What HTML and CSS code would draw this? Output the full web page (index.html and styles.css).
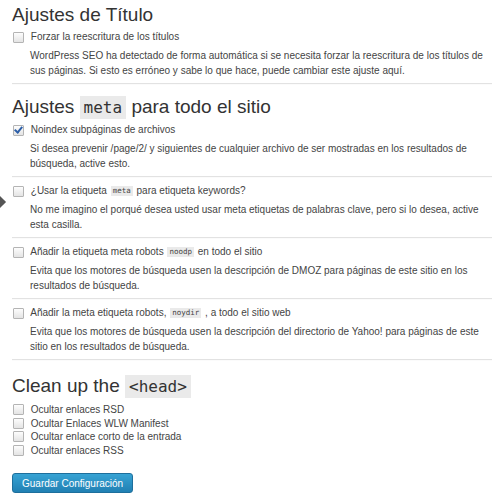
FILE: index.html
```html
<!DOCTYPE html>
<html lang="es">
<head>
  <meta charset="UTF-8" />
  <title>Ajustes</title>
  <link rel="stylesheet" href="styles.css">
</head>
<body>

  <span class="flecha-menu"></span>

  <div class="wrap">
    <h2 class="titulo">Ajustes de Título</h2>
    <div class="opcion">
      <label class="check"><input type="checkbox"> Forzar la reescritura de los títulos</label>
      <p class="desc">WordPress SEO ha detectado de forma automática si se necesita forzar la reescritura de los títulos de sus páginas. Si esto es erróneo y sabe lo que hace, puede cambiar este ajuste aquí.</p>
    </div>

    <h2 class="titulo">Ajustes <code>meta</code> para todo el sitio</h2>
    <div class="opcion">
      <label class="check"><input type="checkbox" checked> Noindex subpáginas de archivos</label>
      <p class="desc">Si desea prevenir /page/2/ y siguientes de cualquier archivo de ser mostradas en los resultados de búsqueda, active esto.</p>
    </div>
    <div class="opcion">
      <label class="check"><input type="checkbox"> ¿Usar la etiqueta <code>meta</code> para etiqueta keywords?</label>
      <p class="desc">No me imagino el porqué desea usted usar meta etiquetas de palabras clave, pero si lo desea, active esta casilla.</p>
    </div>
    <div class="opcion">
      <label class="check"><input type="checkbox"> Añadir la etiqueta meta robots <code>noodp</code> en todo el sitio</label>
      <p class="desc">Evita que los motores de búsqueda usen la descripción de DMOZ para páginas de este sitio en los resultados de búsqueda.</p>
    </div>
    <div class="opcion">
      <label class="check"><input type="checkbox"> Añadir la meta etiqueta robots, <code>noydir</code> , a todo el sitio web</label>
      <p class="desc">Evita que los motores de búsqueda usen la descripción del directorio de Yahoo! para páginas de este sitio en los resultados de búsqueda.</p>
    </div>

    <h2 class="titulo titulo-head">Clean up the <code>&lt;head&gt;</code></h2>
    <div class="lista">
      <label class="check"><input type="checkbox"> Ocultar enlaces RSD</label>
      <label class="check"><input type="checkbox"> Ocultar Enlaces WLW Manifest</label>
      <label class="check"><input type="checkbox"> Ocultar enlace corto de la entrada</label>
      <label class="check"><input type="checkbox"> Ocultar enlaces RSS</label>
    </div>

    <button class="boton">Guardar Configuración</button>
  </div>

</body>
</html>
```

FILE: styles.css
```css
body {
  margin: 0;
  background-color: #fff;
  font-family: "Liberation Sans", Arial, sans-serif;
  font-size: 10px;
  color: #444;
}

.wrap {
  padding: 2px 8px 0 12px;
}

/* flechita del menú lateral, asoma por la izquierda */
.flecha-menu {
  position: absolute;
  left: -6px;
  top: 197px;
  width: 10px;
  height: 10px;
  background-color: #555;
  transform: rotate(45deg);
}

.titulo {
  margin: 0 0 2px;
  font-size: 19px;
  font-weight: normal;
  line-height: 26px;
  color: #333;
}

.opcion + .titulo {
  margin-top: 10px;
}

.opcion + .titulo-head {
  margin-top: 13px;
}

.titulo code {
  font-family: "DejaVu Sans Mono", monospace;
  font-size: 16px;
  background-color: #eaeaea;
  padding: 2px 4px;
  color: #333;
}

.opcion {
  border-bottom: 1px solid #e2e2e2;
  box-shadow: 0 1px 0 #fbfbfb;
  padding-bottom: 5px;
  margin-bottom: 7px;
}

.check {
  display: flex;
  align-items: center;
  line-height: 14px;
  white-space: pre;
}

.lista .check {
  line-height: 13.5px;
}

.check input {
  appearance: none;
  -webkit-appearance: none;
  position: relative;
  box-sizing: border-box;
  width: 11px;
  height: 11px;
  margin: 0 4px 0 1px;
  border: 1px solid #b4b4b4;
  border-radius: 1px;
  background: linear-gradient(#fdfdfd, #e4e4e4);
}

.check input:checked::after {
  content: "";
  position: absolute;
  left: 2px;
  top: -1px;
  width: 3px;
  height: 6px;
  border: solid #2d5fa8;
  border-width: 0 2px 2px 0;
  transform: rotate(40deg);
}

.check code {
  font-family: "DejaVu Sans Mono", monospace;
  font-size: 7.5px;
  line-height: 10px;
  background-color: #eaeaea;
  padding: 0 2px;
  margin: 0 1px;
}

.desc {
  margin: 4px 0 0 18px;
  line-height: 15px;
}

.lista {
  padding-top: 1px;
}

.boton {
  display: block;
  margin-top: 16px;
  height: 20px;
  padding: 0 9px;
  background: linear-gradient(#37a3d4, #2180b3);
  border: 1px solid #1e6f9c;
  border-radius: 3px;
  color: #fff;
  font-family: "Liberation Sans", Arial, sans-serif;
  font-size: 10px;
}
```
